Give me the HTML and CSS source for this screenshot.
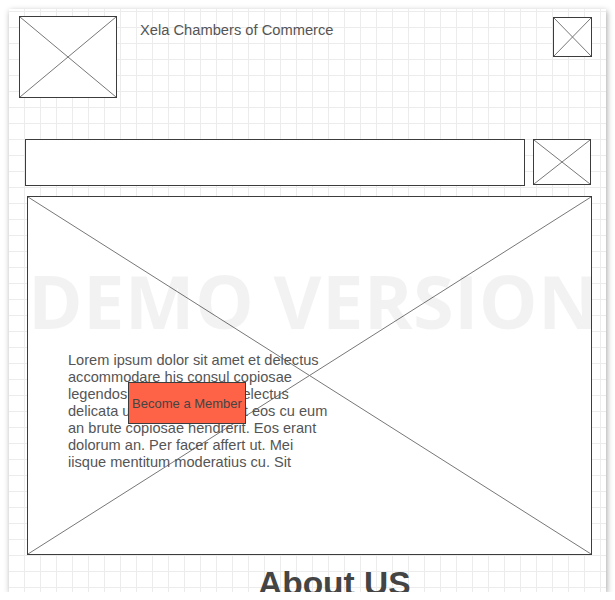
FILE: index.html
```html
<!DOCTYPE html>
<html lang="en">
<head>
  <meta charset="UTF-8" />
  <meta name="viewport" content="width=device-width, initial-scale=1.0"/>
  <title>Xela Chambers of Commerce – Home</title>
  <link rel="stylesheet" href="styles.css">
</head>
<body>
  <div class="canvas">
    <div class="header">
      <div class="placeholder logo">
        <svg viewBox="0 0 100 100" preserveAspectRatio="none"><line x1="0" y1="0" x2="100" y2="100"/><line x1="100" y1="0" x2="0" y2="100"/></svg>
      </div>
      <div class="site-title">Xela Chambers of Commerce</div>
      <div class="placeholder menu-icon">
        <svg viewBox="0 0 100 100" preserveAspectRatio="none"><line x1="0" y1="0" x2="100" y2="100"/><line x1="100" y1="0" x2="0" y2="100"/></svg>
      </div>
    </div>

    <div class="search-row">
      <div class="search-box"></div>
      <div class="placeholder search-btn">
        <svg viewBox="0 0 100 100" preserveAspectRatio="none"><line x1="0" y1="0" x2="100" y2="100"/><line x1="100" y1="0" x2="0" y2="100"/></svg>
      </div>
    </div>

    <div class="placeholder hero">
      <svg viewBox="0 0 100 100" preserveAspectRatio="none"><line x1="0" y1="0" x2="100" y2="100"/><line x1="100" y1="0" x2="0" y2="100"/></svg>
      <div class="watermark">DEMO VERSION</div>
      <p class="hero-text">Lorem ipsum dolor sit amet et delectus accommodare his consul copiosae legendos at vix ad putent delectus delicata usu. Vidit dissentiet eos cu eum an brute copiosae hendrerit. Eos erant dolorum an. Per facer affert ut. Mei iisque mentitum moderatius cu. Sit</p>
      <button class="join-btn">Become a Member</button>
    </div>

    <h2 class="section-title">About US</h2>
  </div>
</body>
</html>
```

FILE: styles.css
```css
body {
  margin: 0;
  background-color: #fff;
  font-family: 'Liberation Sans', Arial, sans-serif;
  color: #555;
}

.canvas {
  position: relative;
  margin: 9px 0 0 9px;
  width: 597px;
  height: 583px;
  overflow: hidden;
  background-color: #fff;
  background-image:
    linear-gradient(#ececec 1px, transparent 1px),
    linear-gradient(90deg, #ececec 1px, transparent 1px);
  background-size: 16px 16px;
  background-position: 15px 2px;
  box-shadow: 1px 2px 6px rgba(0, 0, 0, 0.35);
}

.placeholder {
  position: relative;
  box-sizing: border-box;
  border: 1px solid #3c3c3c;
  background-color: #fff;
}

.placeholder svg {
  position: absolute;
  top: 0;
  left: 0;
  width: 100%;
  height: 100%;
}

.placeholder line {
  stroke: #777;
  stroke-width: 1;
  vector-effect: non-scaling-stroke;
}

.header {
  display: flex;
  align-items: flex-start;
  padding-top: 7px;
}

.logo {
  width: 98px;
  height: 82px;
  margin-left: 10px;
}

.site-title {
  flex: 1;
  margin: 6px 0 0 23px;
  font-size: 14.7px;
  color: #555;
}

.menu-icon {
  width: 39px;
  height: 40px;
  margin: 1px 14px 0 0;
}

.search-row {
  display: flex;
  gap: 8px;
  margin: 41px 0 0 16px;
}

.search-box {
  box-sizing: border-box;
  width: 500px;
  height: 47px;
  border: 1px solid #3c3c3c;
  background-color: #fff;
}

.search-btn {
  width: 58px;
  height: 46px;
}

.hero {
  width: 565px;
  height: 359px;
  margin: 10px 0 0 18px;
}

.watermark {
  position: absolute;
  left: 0;
  right: 0;
  top: 66px;
  text-align: center;
  font-family: 'Open Sans', sans-serif;
  font-weight: bold;
  font-size: 74px;
  line-height: 76px;
  letter-spacing: 0.3px;
  color: rgba(0, 0, 0, 0.05);
  white-space: nowrap;
}

.hero-text {
  position: relative;
  width: 266px;
  margin: 0 0 0 40px;
  padding-top: 155px;
  font-size: 14.6px;
  line-height: 17px;
  color: #555;
}

.join-btn {
  position: absolute;
  left: 100px;
  top: 185px;
  width: 118px;
  height: 42px;
  padding: 0;
  border: 1px solid #3c3c3c;
  background-color: #ff6347;
  font-family: 'Liberation Sans', Arial, sans-serif;
  font-size: 13px;
  color: #444;
}

.section-title {
  margin: 10px 0 0 249px;
  font-size: 33.5px;
  line-height: 38px;
  font-weight: bold;
  color: #444;
}
```
